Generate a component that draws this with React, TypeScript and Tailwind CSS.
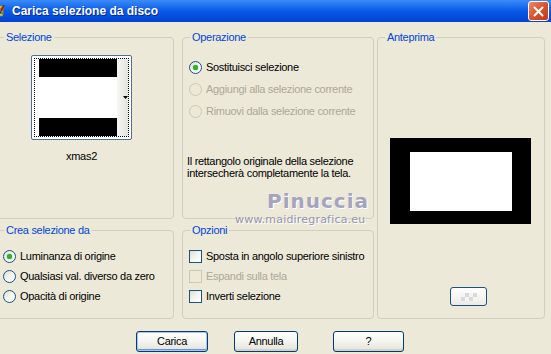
import React from "react";

const font = { fontFamily: '"Liberation Sans", Arial, sans-serif' };

function Group({ title, className, children }: { title: string; className?: string; children?: React.ReactNode }) {
  return (
    <fieldset className={`border border-[#D0D0BF] rounded-[4px] min-w-0 ${className || ""}`}>
      <legend className="ml-[7px] px-[2px] h-[13px] leading-[13px] text-[#0046D5]">{title}</legend>
      {children}
    </fieldset>
  );
}

function Radio({ label, checked, disabled }: { label: string; checked?: boolean; disabled?: boolean }) {
  return (
    <div className={`flex items-center h-[13px] gap-[4px] ${disabled ? "text-[#ACA899]" : "text-black"}`}>
      <span
        className={`w-[13px] h-[13px] shrink-0 rounded-full border flex items-center justify-center ${
          disabled ? "border-[#CAC8BB] bg-[#ECE9D8]" : "border-[#1C5180] bg-gradient-to-br from-[#DCDCD7] via-[#F4F4F0] to-white"
        }`}
      >
        {checked && <span className="w-[5px] h-[5px] rounded-full bg-[#2FB32F] shadow-[0_0_1px_#1E8A1E]" />}
      </span>
      <span className="whitespace-nowrap">{label}</span>
    </div>
  );
}

function Check({ label, disabled }: { label: string; disabled?: boolean }) {
  return (
    <div className={`flex items-center h-[13px] gap-[4px] ${disabled ? "text-[#ACA899]" : "text-black"}`}>
      <span
        className={`w-[13px] h-[13px] shrink-0 border ${
          disabled ? "border-[#CAC8BB] bg-[#ECE9D8]" : "border-[#1C5180] bg-gradient-to-br from-[#DCDCD7] via-[#F4F4F0] to-white"
        }`}
      />
      <span className="whitespace-nowrap">{label}</span>
    </div>
  );
}

function XpButton({ label, width, focused }: { label: string; width: string; focused?: boolean }) {
  return (
    <button
      className={`${width} h-[21px] rounded-[3px] border border-[#003C74] bg-gradient-to-b from-white via-[#F4F4F0] to-[#E3E2DA] text-black leading-[19px] ${
        focused ? "shadow-[inset_0_0_0_1px_#A9C6F4,inset_0_-1px_0_1px_#6A8FD5]" : "shadow-[inset_0_-2px_0_#D6D0C5]"
      }`}
    >
      {label}
    </button>
  );
}

export default function App() {
  return (
    <div className="w-[551px] h-[354px] bg-[#ECE9D8] overflow-hidden text-[11px] tracking-[-0.3px]" style={font}>
      {/* title bar */}
      <div className="h-[22px] flex items-center bg-gradient-to-b from-[#3A8CF8] via-[#0858E8] to-[#0044D0] overflow-hidden">
        <svg width="16" height="16" viewBox="0 0 16 16" className="-ml-[10px] shrink-0">
          <rect x="2" y="3" width="11" height="10" rx="1" fill="#F2E3B8" stroke="#9B6B2A" />
          <circle cx="12" cy="6" r="2" fill="#E04A2A" />
          <circle cx="12" cy="10" r="1.6" fill="#3AA34A" />
          <path d="M14 2 L9 12" stroke="#5A3A14" strokeWidth="1.5" />
        </svg>
        <span className="ml-[6px] text-white font-bold text-[12px] tracking-[0px] [text-shadow:1px_1px_0_#0A2A8A]">
          Carica selezione da disco
        </span>
        <div className="ml-auto mr-[2px] w-[21px] h-[20px] rounded-[3px] border border-white bg-gradient-to-br from-[#E98A6A] via-[#D9522C] to-[#BF3A18] flex items-center justify-center">
          <svg width="11" height="11" viewBox="0 0 11 11">
            <path d="M1.5 1.5 L9.5 9.5 M9.5 1.5 L1.5 9.5" stroke="white" strokeWidth="2" strokeLinecap="round" />
          </svg>
        </div>
      </div>

      {/* body */}
      <div className="flex pt-[9px]">
        <div className="-ml-[4px] w-[178px] flex flex-col gap-[5px]">
          <Group title="Selezione" className="h-[188px]">
            <div className="ml-[34px] mt-[11px] w-[101px] flex flex-col items-center">
              <div className="w-[101px] h-[85px] rounded-[2px] border border-[#4E6E96] bg-white p-[2px]">
                <div className="w-full h-full border border-dotted border-black flex">
                  <div className="ml-[4px] w-[78px] flex flex-col">
                    <div className="h-[18px] bg-black" />
                    <div className="flex-1 bg-white" />
                    <div className="h-[18px] bg-black" />
                  </div>
                  <div className="flex-1 bg-gradient-to-r from-[#F6F6F4] to-[#E4E4DE] flex items-center justify-end">
                    <svg width="5" height="3" viewBox="0 0 5 3">
                      <path d="M0 0 H5 L2.5 3 Z" fill="black" />
                    </svg>
                  </div>
                </div>
              </div>
              <div className="mt-[10px] h-[13px] leading-[13px] text-black">xmas2</div>
            </div>
          </Group>
          <Group title="Crea selezione da" className="h-[95px]">
            <div className="ml-[6px] mt-[13px] flex flex-col gap-[7px]">
              <Radio label="Luminanza di origine" checked />
              <Radio label="Qualsiasi val. diverso da zero" />
              <Radio label="Opacità di origine" />
            </div>
          </Group>
        </div>

        <div className="ml-[8px] w-[192px] flex flex-col gap-[5px] relative">
          <Group title="Operazione" className="h-[188px]">
            <div className="ml-[6px] mt-[17px] flex flex-col gap-[9px]">
              <Radio label="Sostituisci selezione" checked />
              <Radio label="Aggiungi alla selezione corrente" disabled />
              <Radio label="Rimuovi dalla selezione corrente" disabled />
            </div>
            <p className="ml-[4px] mt-[37px] leading-[12px] text-black">
              Il rettangolo originale della selezione
              <br />
              intersecherà completamente la tela.
            </p>
          </Group>
          <Group title="Opzioni" className="h-[95px]">
            <div className="ml-[6px] mt-[13px] flex flex-col gap-[7px]">
              <Check label="Sposta in angolo superiore sinistro" />
              <Check label="Espandi sulla tela" disabled />
              <Check label="Inverti selezione" />
            </div>
          </Group>
          {/* watermark */}
          <div
            className="absolute left-[53px] top-[160px] flex flex-col pointer-events-none"
            style={{ fontFamily: '"DejaVu Sans", sans-serif' }}
          >
            <span className="ml-[32px] text-[20px] leading-[20px] font-bold tracking-[1px] text-[#A4A4BE] [text-shadow:1px_1px_0_#ffffff]">
              Pinuccia
            </span>
            <span className="mt-[2px] text-[11px] leading-[13px] tracking-[0.2px] text-[#9494AE] [text-shadow:1px_1px_0_#ffffff]">
              www.maidiregrafica.eu
            </span>
          </div>
        </div>

        <div className="ml-[3px] w-[168px]">
          <Group title="Anteprima" className="h-[288px]">
            <div className="flex flex-col">
              <div className="ml-[12px] mt-[94px] w-[141px] h-[86px] bg-black pt-[14px] pl-[20px]">
                <div className="w-[102px] h-[59px] bg-white" />
              </div>
              <div className="ml-[72px] mt-[63px] w-[37px] h-[19px] rounded-[3px] border border-[#1C5180] bg-gradient-to-b from-white to-[#ECEBE6] flex items-center justify-center">
                <div className="grid grid-cols-4 w-[16px] h-[8px]">
                  <span className="bg-[#F4F4F4]" />
                  <span className="bg-[#DADADA]" />
                  <span className="bg-[#F4F4F4]" />
                  <span className="bg-[#DADADA]" />
                  <span className="bg-[#DADADA]" />
                  <span className="bg-[#F4F4F4]" />
                  <span className="bg-[#DADADA]" />
                  <span className="bg-[#F4F4F4]" />
                </div>
              </div>
            </div>
          </Group>
        </div>
      </div>

      {/* buttons */}
      <div className="flex mt-[12px] pl-[136px]">
        <XpButton label="Carica" width="w-[72px]" focused />
        <div className="ml-[26px]">
          <XpButton label="Annulla" width="w-[64px]" />
        </div>
        <div className="ml-[35px]">
          <XpButton label="?" width="w-[71px]" />
        </div>
      </div>
    </div>
  );
}
